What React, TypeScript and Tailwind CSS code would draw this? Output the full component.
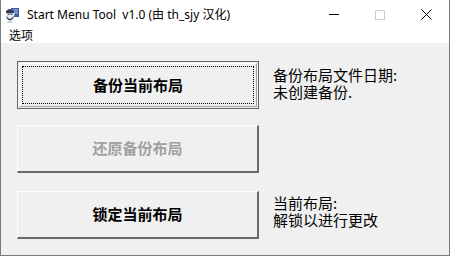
import React from 'react';

const BTN_BASE =
  "w-[242px] h-[48px] flex items-center justify-center bg-[#f0f0f0] text-[15px] font-bold";

const Button = ({ label, primary, disabled }: { label: string; primary?: boolean; disabled?: boolean }) => {
  if (primary) {
    return (
      <div className={`${BTN_BASE} border border-[#646464] p-px`}>
        <div className="w-full h-full border-t border-l border-white border-r border-b border-r-[#a0a0a0] border-b-[#a0a0a0] p-[2px]">
          <div className="w-full h-full border border-dotted border-black flex items-center justify-center text-black">
            {label}
          </div>
        </div>
      </div>
    );
  }
  return (
    <div
      className={`${BTN_BASE} border-t border-l border-white border-r-2 border-b-2 border-r-[#696969] border-b-[#696969] ${
        disabled ? 'text-[#a0a0a0]' : 'text-black'
      }`}
    >
      {label}
    </div>
  );
};

const AppIcon = () => (
  <svg width="16" height="16" viewBox="0 0 16 16">
    <rect x="7" y="1" width="8" height="9" fill="#3b5f9e" />
    <rect x="9" y="2" width="5" height="5" fill="#6f8fcf" />
    <ellipse cx="6" cy="7" rx="4.5" ry="5" fill="#e9eef5" />
    <path d="M2 4 Q6 0 10 4 L10 6 L2 6 Z" fill="#2f3d5a" />
    <rect x="3.5" y="6.5" width="2" height="1.2" fill="#1e2638" />
    <rect x="6.5" y="6.5" width="2" height="1.2" fill="#1e2638" />
    <path d="M2.5 9 Q6 15 9.5 9 L9.5 11 Q6 16 2.5 11 Z" fill="#3a4660" />
    <path d="M4 14 L8 14 L9 16 L3 16 Z" fill="#c9d3e3" />
  </svg>
);

export default function App() {
  return (
    <div
      className="w-[450px] h-[256px] flex flex-col bg-white border-l border-r border-b border-[#7a7a7a] overflow-hidden"
      style={{ fontFamily: '"Noto Sans", "Noto Sans CJK SC", sans-serif' }}
    >
      {/* title bar */}
      <div className="h-[29px] flex items-center shrink-0">
        <div className="pl-[3px] pr-[7px] flex items-center">
          <AppIcon />
        </div>
        <span className="text-[12px] text-black leading-none">Start Menu Tool&nbsp;&nbsp;v1.0 (由 th_sjy 汉化)</span>
        <div className="ml-auto flex h-full">
          <div className="w-[46px] h-full flex items-center justify-center">
            <div className="w-[10px] h-px bg-black" />
          </div>
          <div className="w-[46px] h-full flex items-center justify-center">
            <div className="w-[10px] h-[10px] border border-[#cccccc]" />
          </div>
          <div className="w-[46px] h-full flex items-center justify-center">
            <svg width="11" height="11" viewBox="0 0 11 11">
              <path d="M0.5 0.5 L10.5 10.5 M10.5 0.5 L0.5 10.5" stroke="#000" strokeWidth="1" />
            </svg>
          </div>
        </div>
      </div>

      {/* menu bar */}
      <div className="h-[14px] flex items-center shrink-0 pl-[8px]">
        <span className="text-[12px] leading-none text-black">选项</span>
      </div>

      {/* client area */}
      <div
        className="flex-1 bg-[#f0f0f0] flex pl-[16px] pt-[18px]"
        style={{ fontFamily: '"Noto Sans CJK SC", sans-serif' }}
      >
        <div className="flex flex-col">
          <Button label="备份当前布局" primary />
          <div className="h-[16px]" />
          <Button label="还原备份布局" disabled />
          <div className="h-[18px]" />
          <Button label="锁定当前布局" />
        </div>
        <div className="flex flex-col pl-[14px] text-[15px] leading-[17px] text-black">
          <div className="pt-[5px]">
            <div>备份布局文件日期:</div>
            <div>未创建备份.</div>
          </div>
          <div className="pt-[94px]">
            <div>当前布局:</div>
            <div>解锁以进行更改</div>
          </div>
        </div>
      </div>
    </div>
  );
}
